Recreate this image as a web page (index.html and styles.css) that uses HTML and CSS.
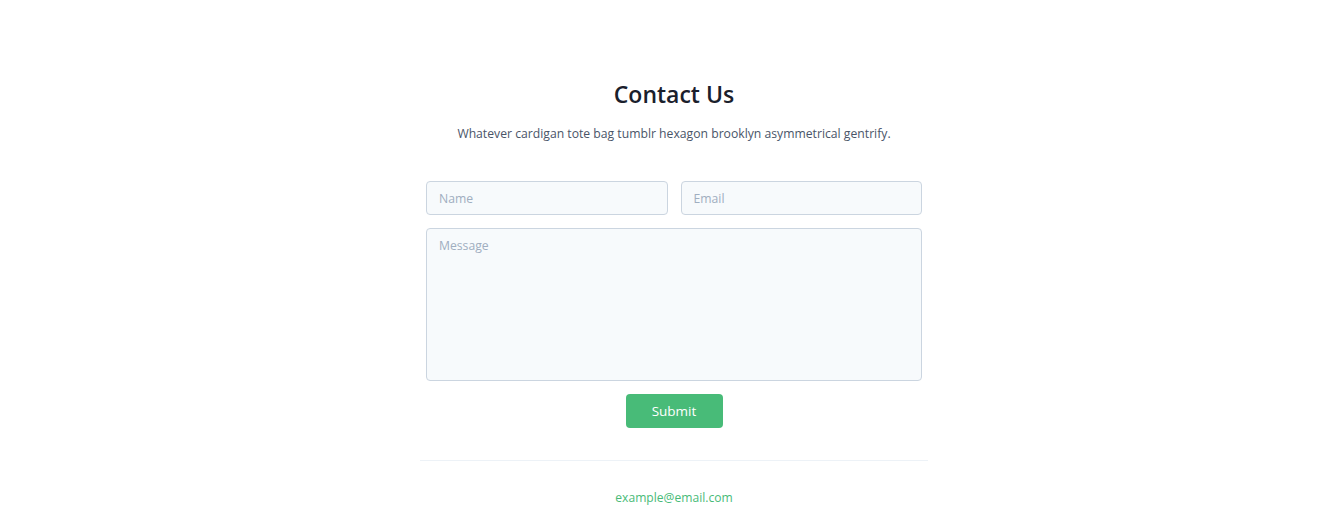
FILE: index.html
```html
<!DOCTYPE html>
<html>
<head>
<meta charset="utf-8">
<link rel="stylesheet" href="styles.css">
</head>
<body>
<section class="contact">
  <div class="head">
    <h1 class="title">Contact Us</h1>
    <p class="lead">Whatever cardigan tote bag tumblr hexagon brooklyn asymmetrical gentrify.</p>
  </div>
  <form class="form">
    <div class="row">
      <input class="field" type="text" placeholder="Name">
      <input class="field" type="email" placeholder="Email">
    </div>
    <textarea class="field message" placeholder="Message"></textarea>
    <div class="actions">
      <button class="submit" type="button">Submit</button>
    </div>
  </form>
  <div class="footer">
    <a class="mail" href="#">example@email.com</a>
  </div>
</section>
</body>
</html>
```
FILE: styles.css
```css
html, body {
  margin: 0;
  padding: 0;
  background: #fff;
}
body {
  font-family: "Open Sans", "Noto Sans", sans-serif;
  color: #4a5568;
  padding-left: 5px;
}
.contact {
  width: 508px;
  margin: 0 auto;
  padding-top: 77px;
  display: flex;
  flex-direction: column;
  align-items: center;
}
.head {
  text-align: center;
  margin-bottom: 37px;
}
.title {
  margin: 0 0 13px;
  font-size: 23px;
  font-weight: 600;
  line-height: 34px;
  color: #1a202c;
}
.lead {
  margin: 0;
  font-size: 12.2px;
  line-height: 20px;
}
.form {
  width: 496px;
  display: flex;
  flex-direction: column;
  gap: 13px;
}
.row {
  display: flex;
  gap: 13px;
}
.field {
  flex: 1;
  min-width: 0;
  box-sizing: border-box;
  height: 34px;
  padding: 0 12px;
  background: #f7fafc;
  border: 1px solid #cbd5e0;
  border-radius: 4px;
  font-family: inherit;
  font-size: 12.2px;
  color: #4a5568;
  outline: none;
}
.field::placeholder {
  color: #a0aec0;
}
.message {
  flex: none;
  height: 153px;
  padding: 8px 12px;
  resize: none;
  display: block;
}
.actions {
  display: flex;
  justify-content: center;
}
.submit {
  width: 97px;
  height: 34px;
  border: 0;
  border-radius: 4px;
  background: #48bb78;
  color: #fff;
  font-family: inherit;
  font-size: 13.5px;
  cursor: pointer;
}
.footer {
  margin-top: 32px;
  width: 508px;
  border-top: 1px solid #edf2f7;
  padding-top: 24px;
  text-align: center;
}
.mail {
  color: #48bb78;
  text-decoration: none;
  font-size: 12.1px;
  line-height: 18px;
}
```
